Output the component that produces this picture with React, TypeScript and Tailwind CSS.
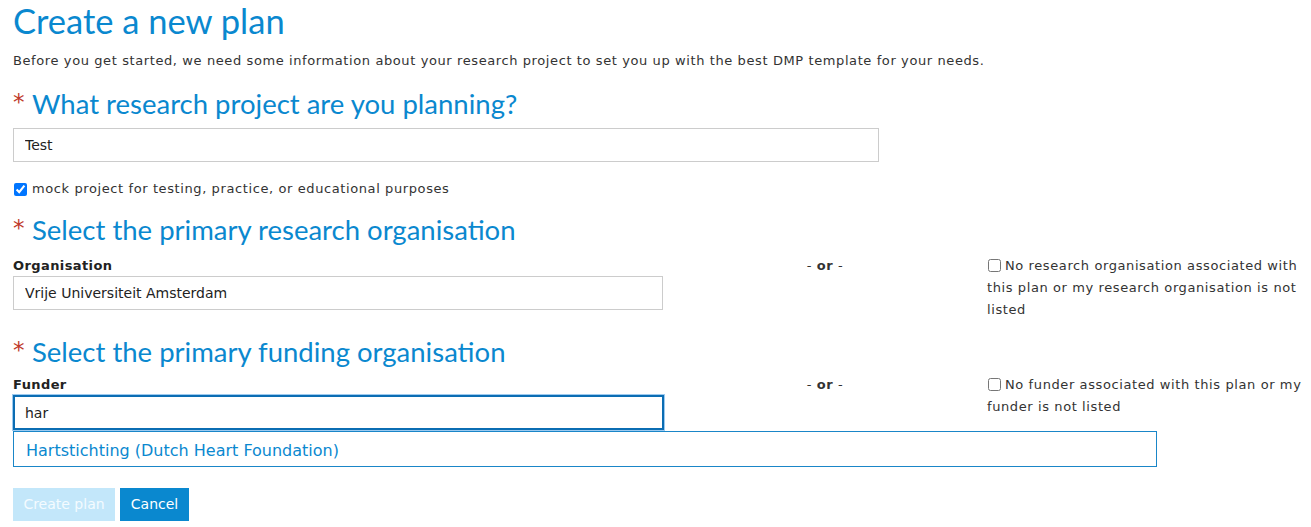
import { useState } from 'react';

const heading = "font-['Lato',sans-serif] text-[#0a88cf]";
const sans = "font-['DejaVu_Sans','Verdana',sans-serif]";
const body = `${sans} text-[13px] tracking-[0.6px] text-[#333]`;

const Required = ({ title }: { title: string }) => (
  <h2 className={`${heading} text-[27.5px] leading-[34px] flex`}>
    <span className={`${sans} text-[#c0392b] text-[23px] leading-[30px] w-[19px] shrink-0`}>*</span>
    {title}
  </h2>
);

const OrRow = ({
  label,
  note,
  children,
}: {
  label: string;
  note: string;
  children: React.ReactNode;
}) => (
  <div className="grid grid-cols-[650px_324px_320px]">
    <div>
      <label className={`${sans} block text-[13px] font-bold tracking-[0.4px] text-[#222] leading-[18px] pt-[2px]`}>
        {label}
      </label>
      <div className="relative mt-[1px]">{children}</div>
    </div>
    <div className={`${body} text-center leading-[22px]`}>
      - <b>or</b> -
    </div>
    <label className={`${body} leading-[22px]`}>
      <input
        type="checkbox"
        className="align-[-2px] mr-[4px] ml-[1px] w-[13px] h-[13px]"
      />
      {note}
    </label>
  </div>
);

export default function App() {
  const [title, setTitle] = useState('Test');
  const [org, setOrg] = useState('Vrije Universiteit Amsterdam');
  const [funder, setFunder] = useState('har');
  const [mock, setMock] = useState(true);

  return (
    <div className="bg-white min-h-screen px-[13px] pt-[1px]">
      <h1 className={`${heading} text-[34.5px] leading-[40px]`}>Create a new plan</h1>
      <p className={`${body} leading-[20px] mt-[10px]`}>
        Before you get started, we need some information about your research
        project to set you up with the best DMP template for your needs.
      </p>

      <div className="mt-[16px]">
        <Required title="What research project are you planning?" />
      </div>
      <input
        value={title}
        onChange={(e) => setTitle(e.target.value)}
        className={`${sans} text-[14px] text-[#222] mt-[7px] block w-[866px] h-[34px] border border-[#ccc] px-[11px] outline-none`}
      />
      <label className={`${body} flex items-center mt-[17px] leading-[20px]`}>
        <input
          type="checkbox"
          checked={mock}
          onChange={(e) => setMock(e.target.checked)}
          className="w-[13px] h-[13px] ml-[1px] mr-[5px] accent-[#0075ff]"
        />
        mock project for testing, practice, or educational purposes
      </label>

      <div className="mt-[14px]">
        <Required title="Select the primary research organisation" />
      </div>
      <div className="mt-[8px]">
        <OrRow
          label="Organisation"
          note="No research organisation associated with this plan or my research organisation is not listed"
        >
          <input
            value={org}
            onChange={(e) => setOrg(e.target.value)}
            className={`${sans} text-[14px] text-[#222] block w-[650px] h-[34px] border border-[#ccc] px-[11px] outline-none`}
          />
        </OrRow>
      </div>

      <div className="mt-[14px]">
        <Required title="Select the primary funding organisation" />
      </div>
      <div className="mt-[5px]">
        <OrRow
          label="Funder"
          note="No funder associated with this plan or my funder is not listed"
        >
          <input
            value={funder}
            onChange={(e) => setFunder(e.target.value)}
            className={`${sans} text-[14px] text-[#222] block w-[651px] h-[35px] border-2 border-[#0b6db3] px-[10px] outline-none shadow-[0_0_0_1px_#9ccaf0]`}
          />
          <ul className="absolute left-0 top-[36px] w-[1144px] h-[36px] bg-white border border-[#1a86c8] z-10">
            <li className={`${sans} text-[16px] text-[#0a88cf] leading-[38px] px-[12px]`}>
              Hartstichting (Dutch Heart Foundation)
            </li>
          </ul>
        </OrRow>
      </div>

      <div className={`${sans} flex gap-[5px] mt-[58px] text-[14px]`}>
        <button
          disabled
          className="h-[33px] w-[102px] bg-[#c3e7fa] text-[#f4fbff]"
        >
          Create plan
        </button>
        <button className="h-[33px] w-[69px] bg-[#0a88cf] text-white">
          Cancel
        </button>
      </div>
    </div>
  );
}
